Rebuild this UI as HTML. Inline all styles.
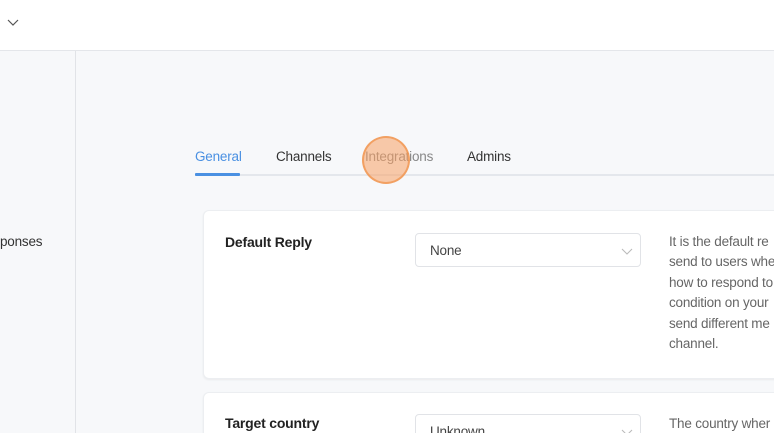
<!DOCTYPE html>
<html style="overflow:hidden;height:433px"><head><style>
body{margin:0;width:774px;height:433px;overflow:hidden;background:#f7f8fa;font-family:"Liberation Sans",Arial,sans-serif;position:relative}
.abs{position:absolute}
.hdr{left:0;top:0;width:774px;height:50px;background:#fff;border-bottom:1px solid #e4e6ea}
.side{left:75px;top:51px;width:1px;height:382px;background:#e1e3e7}
.tab{top:149px;font-size:13.5px;color:#333;letter-spacing:-0.2px}
.card{left:203px;width:600px;background:#fff;border-radius:6px;box-shadow:0 1px 2px rgba(0,0,0,.06);border:1px solid #eceef1}
.lbl{font-size:14px;font-weight:bold;color:#222;letter-spacing:-0.2px}
.sel{left:415px;width:226px;height:34px;border:1px solid #e1e3e7;border-radius:4px;background:#fff;box-sizing:border-box}
.sel span{position:absolute;left:14px;top:9px;font-size:13.5px;color:#444;letter-spacing:-0.2px}
.desc{left:669px;font-size:13.5px;color:#666;line-height:20.4px;white-space:nowrap;letter-spacing:-0.2px}
</style></head><body>
<div class="abs hdr"></div>
<svg class="abs" style="left:7px;top:19px" width="12" height="8"><path d="M1 1 L6 6 L11 1" fill="none" stroke="#555" stroke-width="1.2"/></svg>
<div class="abs side"></div>
<div class="abs" style="left:0;top:234px;font-size:13.5px;color:#333;letter-spacing:-0.2px">ponses</div>
<div class="abs" style="left:195px;top:174px;width:579px;height:2px;background:#e4e7ec"></div>
<div class="abs" style="left:195px;top:173px;width:45px;height:3px;background:#4a90e2;border-radius:1px"></div>
<div class="abs tab" style="left:195px;color:#4a90e2">General</div>
<div class="abs tab" style="left:276px">Channels</div>
<div class="abs tab" style="left:365px;color:#888">Integrations</div>
<div class="abs tab" style="left:467px">Admins</div>
<div class="abs" style="left:362px;top:136px;width:48px;height:48px;border-radius:50%;background:rgba(247,160,100,.55);border:2px solid rgba(240,150,80,.8);box-sizing:border-box"></div>
<div class="abs card" style="top:210px;height:167px"></div>
<div class="abs lbl" style="left:225px;top:234px">Default Reply</div>
<div class="abs sel" style="top:233px"><span>None</span>
<svg class="abs" style="left:205px;top:14px" width="12" height="8"><path d="M1 1 L6 6 L11 1" fill="none" stroke="#bbb" stroke-width="1.1"/></svg></div>
<div class="abs desc" style="top:232px">It is the default re<br>send to users whe<br>how to respond to<br>condition on your<br>send different me<br>channel.</div>
<div class="abs card" style="top:392px;height:60px"></div>
<div class="abs lbl" style="left:225px;top:415px">Target country</div>
<div class="abs sel" style="top:414px"><span>Unknown</span>
<svg class="abs" style="left:205px;top:14px" width="12" height="8"><path d="M1 1 L6 6 L11 1" fill="none" stroke="#bbb" stroke-width="1.1"/></svg></div>
<div class="abs desc" style="top:414px">The country wher</div>
</body></html>
